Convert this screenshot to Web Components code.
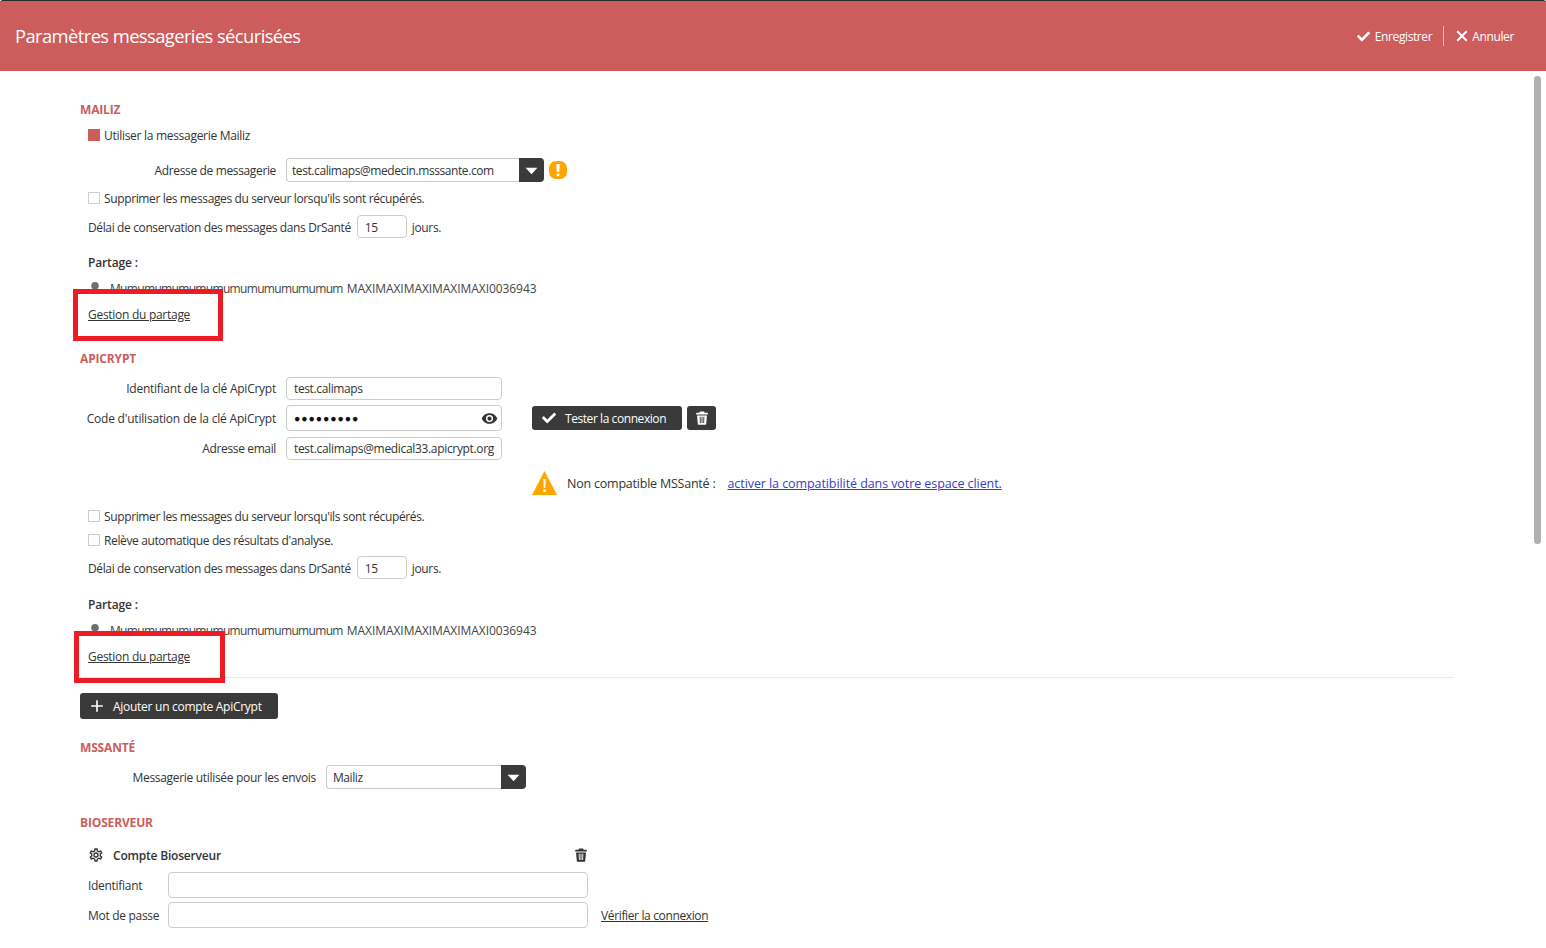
<!DOCTYPE html>
<html lang="fr">
<head>
<meta charset="utf-8">
<title>Paramètres messageries sécurisées</title>
<style>
    html, body { margin: 0; height: 100%; overflow: hidden; background: #fff; }
    body { font: 12px "Open Sans", "Liberation Sans", sans-serif; letter-spacing: -0.37px; color: #333; }
    .hr { height: 1px; background: #e8e8e8; width: 1374px; margin-top: 10px; }
</style>
</head>
<body>
<settings-page>
    <top-bar slot="top" heading="Paramètres messageries sécurisées"></top-bar>

    <section-title style="margin-top:30px">MAILIZ</section-title>
    <check-row checked style="margin-top:6px;letter-spacing:-0.29px">Utiliser la messagerie Mailiz</check-row>
    <mail-select label="Adresse de messagerie" value="test.calimaps@medecin.msssante.com" warn style="margin-top:13px"></mail-select>
    <check-row style="margin-top:6px">Supprimer les messages du serveur lorsqu'ils sont récupérés.</check-row>
    <delay-row style="margin-top:7px"></delay-row>
    <share-block style="margin-top:15px"></share-block>

    <section-title style="margin-top:25px">APICRYPT</section-title>
    <api-form style="margin-top:9px"></api-form>
    <check-row style="margin-top:11px">Supprimer les messages du serveur lorsqu'ils sont récupérés.</check-row>
    <check-row style="margin-top:4px">Relève automatique des résultats d'analyse.</check-row>
    <delay-row style="margin-top:6px"></delay-row>
    <share-block wide style="margin-top:16px"></share-block>
    <div class="hr"></div>
    <dark-button icon="plus" style="margin-top:15px;letter-spacing:-0.27px">Ajouter un compte ApiCrypt</dark-button>

    <section-title style="margin-top:20px">MSSANTÉ</section-title>
    <mail-select label="Messagerie utilisée pour les envois" value="Mailiz" wide style="margin-top:8px"></mail-select>

    <section-title style="margin-top:25px">BIOSERVEUR</section-title>
    <bio-form style="margin-top:13px"></bio-form>
</settings-page>

<script>
const ICONS = {
    check: ['0 0 512 512', 'M173.9 439.4l-166.4-166.4c-10-10-10-26.2 0-36.2l36.2-36.2c10-10 26.2-10 36.2 0L192 312.7 432.1 72.6c10-10 26.2-10 36.2 0l36.2 36.2c10 10 10 26.2 0 36.2l-294.4 294.4c-10 10-26.2 10-36.2 0z'],
    times: ['0 0 24 24', 'M5 2.6L12 9.6 19 2.6 21.4 5 14.4 12 21.4 19 19 21.4 12 14.4 5 21.4 2.6 19 9.6 12 2.6 5z'],
    plus: ['0 0 24 24', 'M10.6 2h2.8v8.6H22v2.8h-8.6V22h-2.8v-8.6H2v-2.8h8.6z'],
    trash: ['0 0 24 24', 'M8.5 1h7l1 2H21a1 1 0 0 1 1 1v2H2V4a1 1 0 0 1 1-1h4.500zM3.500 7.500h17L19.200 22a1.500 1.500 0 0 1-1.500 1.500H6.300A1.500 1.500 0 0 1 4.800 22zM8 10l.4 10.500h1.500L9.600 10zM11.200 10v10.500h1.600V10zM14.400 10l-.3 10.500h1.500L16 10z'],
    eye: ['0 0 24 24', 'M12 9a3 3 0 0 0-3 3 3 3 0 0 0 3 3 3 3 0 0 0 3-3 3 3 0 0 0-3-3m0 8a5 5 0 0 1-5-5 5 5 0 0 1 5-5 5 5 0 0 1 5 5 5 5 0 0 1-5 5m0-12.500C7 4.500 2.730 7.610 1 12c1.730 4.390 6 7.500 11 7.500s9.270-3.110 11-7.500c-1.730-4.390-6-7.500-11-7.500z'],
    gear: ['0 0 24 24', 'M12,8A4,4 0 0,1 16,12A4,4 0 0,1 12,16A4,4 0 0,1 8,12A4,4 0 0,1 12,8M12,10A2,2 0 0,0 10,12A2,2 0 0,0 12,14A2,2 0 0,0 14,12A2,2 0 0,0 12,10M10,22C9.75,22 9.54,21.82 9.5,21.58L9.13,18.93C8.5,18.68 7.96,18.34 7.44,17.94L4.95,18.95C4.73,19.03 4.46,18.95 4.34,18.73L2.34,15.27C2.21,15.05 2.27,14.78 2.46,14.63L4.57,12.97L4.5,12L4.57,11L2.46,9.37C2.27,9.22 2.21,8.95 2.34,8.73L4.34,5.27C4.46,5.05 4.73,4.96 4.95,5.05L7.44,6.05C7.96,5.66 8.5,5.32 9.13,5.07L9.5,2.42C9.54,2.18 9.75,2 10,2H14C14.25,2 14.46,2.18 14.5,2.42L14.87,5.07C15.5,5.32 16.04,5.66 16.56,6.05L19.05,5.05C19.27,4.96 19.54,5.05 19.66,5.27L21.66,8.73C21.79,8.95 21.73,9.22 21.54,9.37L19.43,11L19.5,12L19.43,13L21.54,14.63C21.73,14.78 21.79,15.05 21.66,15.27L19.66,18.73C19.54,18.95 19.27,19.04 19.05,18.95L16.56,17.95C16.04,18.34 15.5,18.68 14.87,18.93L14.5,21.58C14.46,21.82 14.25,22 14,22H10M11.25,4L10.88,6.61C9.68,6.86 8.62,7.5 7.85,8.39L5.44,7.35L4.69,8.65L6.8,10.2C6.4,11.37 6.4,12.64 6.8,13.8L4.68,15.36L5.43,16.66L7.86,15.62C8.63,16.5 9.68,17.14 10.87,17.38L11.24,20H12.76L13.13,17.39C14.32,17.14 15.37,16.5 16.14,15.62L18.57,16.66L19.32,15.36L17.2,13.81C17.6,12.64 17.6,11.37 17.2,10.2L19.31,8.65L18.56,7.35L16.15,8.39C15.38,7.5 14.32,6.86 13.12,6.62L12.75,4H11.25Z'],
    user: ['0 0 24 24', 'M12 0a6.500 6.500 0 1 1 0 13 6.500 6.500 0 0 1 0-13zM3 20v-3c0-2.500 4-4 9-4s9 1.500 9 4v3z'],
    caret: ['0 0 24 24', 'M1 7h22L12 19z'],
    alert: ['0 0 18 18', 'M7 0h4a7 7 0 0 1 7 7v4a7 7 0 0 1-7 7H7a7 7 0 0 1-7-7V7a7 7 0 0 1 7-7zM7.200 3l.5 8h2.600l.5-8zM7.700 12.500v2.700h2.600v-2.700z'],
};

function icon(name, size, color) {
    const [box, d] = ICONS[name];
    return `<svg width="${size}" height="${size}" viewBox="${box}" fill="${color || 'currentColor'}" fill-rule="evenodd" style="flex:none;display:block"><path d="${d}"/></svg>`;
}

const inputCss = `
    .input { box-sizing: border-box; border: 1px solid #ccc; border-radius: 4px; background: #fff;
        display: flex; align-items: center; padding: 0 6px; color: #333; white-space: nowrap; }
`;

// base class, just fills the shadow root
class Shadow extends HTMLElement {
    connectedCallback() {
        if (!this.shadowRoot) this.attachShadow({ mode: 'open' }).innerHTML = this.render();
    }
}

class SettingsPage extends Shadow {
    render() {
        return `<style>
            :host { display: block; position: relative; height: 948px; overflow: hidden; }
            .body { display: flex; flex-direction: column; padding-left: 80px; }
            .thumb { position: absolute; left: 1534px; top: 76px; width: 7px; height: 468px; border-radius: 4px; background: #b0b0b0; }
        </style>
        <slot name="top"></slot>
        <div class="body"><slot></slot></div>
        <div class="thumb"></div>`;
    }
}

class TopBar extends Shadow {
    render() {
        return `<style>
            :host { display: flex; align-items: center; box-sizing: border-box; height: 71px; padding: 0 32px 0 15px;
                background: #cd5c5c; border-top: 1px solid #2b2b2b; border-radius: 3px 3px 0 0; color: #fff; }
            h1 { margin: -2px 0 0; font-size: 18.4px; font-weight: 400; letter-spacing: -0.6px; flex: 1; }
            .act { display: flex; align-items: center; font-size: 12px; letter-spacing: -0.4px; }
            .act svg { margin-right: 5px; }
            .last svg { margin-right: 3px; }
            .sep { width: 1px; height: 20px; background: #e9b4b4; margin: 0 11px; }
        </style>
        <h1>${this.getAttribute('heading')}</h1>
        <div class="act">${icon('check', 13)}Enregistrer</div>
        <div class="sep"></div>
        <div class="act last" style="letter-spacing:-0.36px">${icon('times', 14)}Annuler</div>`;
    }
}

class SectionTitle extends Shadow {
    render() {
        return `<style>
            :host { display: block; height: 18px; line-height: 18px; font-weight: 700; font-size: 12px; color: #cd5c5c; letter-spacing: -0.15px; }
        </style><slot></slot>`;
    }
}

class CheckRow extends Shadow {
    render() {
        const on = this.hasAttribute('checked');
        return `<style>
            :host { display: flex; align-items: center; gap: 4px; height: 20px; margin-left: 8px; }
            i { box-sizing: border-box; width: 12px; height: 12px; border: 1px solid ${on ? '#cd5c5c' : '#ccc'}; background: ${on ? '#cd5c5c' : '#fff'}; }
        </style><i></i><span><slot></slot></span>`;
    }
}

class MailSelect extends Shadow {
    render() {
        const wide = this.hasAttribute('wide');
        return `<style>${inputCss}
            :host { display: flex; align-items: center; height: 24px; }
            label { width: ${wide ? 236 : 196}px; text-align: right; margin-right: 10px; white-space: nowrap; letter-spacing: ${wide ? -0.31 : -0.36}px; }
            .input { width: ${wide ? 175 : 233}px; height: 24px; border-radius: 4px 0 0 4px; border-right: 0; padding-left: ${wide ? 6 : 5}px; letter-spacing: -0.42px; }
            .arrow { width: 25px; height: 24px; background: #3a3a3a; color: #fff; border-radius: 0 4px 4px 0;
                display: flex; align-items: center; justify-content: center; }
            .warn { margin-left: 5px; color: #ffa500; }
        </style>
        <label>${this.getAttribute('label')}</label>
        <div class="input">${this.getAttribute('value')}</div>
        <div class="arrow">${icon('caret', 13)}</div>
        ${this.hasAttribute('warn') ? `<div class="warn">${icon('alert', 18)}</div>` : ''}`;
    }
}

class DelayRow extends Shadow {
    render() {
        return `<style>${inputCss}
            :host { display: flex; align-items: center; gap: 5px; height: 23px; margin-left: 8px; }
            span { margin-top: 2px; }
            .input { width: 50px; height: 23px; padding: 2px 0 0 7px; margin-left: 1px; }
        </style>
        <span>Délai de conservation des messages dans DrSanté</span>
        <div class="input">15</div>
        <span>jours.</span>`;
    }
}

class ShareBlock extends Shadow {
    render() {
        const wide = this.hasAttribute('wide');
        return `<style>
            :host { display: block; position: relative; margin-left: 8px; }
            .head { height: 20px; line-height: 20px; font-weight: 600; letter-spacing: -0.15px; }
            .user { display: flex; align-items: center; height: 20px; margin-top: 5px; color: #444; }
            .user svg { margin: 2px 8px 0 0; }
            .mu { letter-spacing: -0.67px; margin-right: 4px; }
            .maxi { letter-spacing: -0.06px; }
            a { display: block; height: 20px; line-height: 20px; margin-top: 7px; color: #333; text-decoration: underline; letter-spacing: -0.28px; }
            .mark { position: absolute; left: ${wide ? -14 : -15}px; top: 36px; box-sizing: border-box; width: ${wide ? 151 : 150}px; height: 52px; border: 5px solid #ed1c24; }
        </style>
        <div class="head">Partage :</div>
        <div class="user">${icon('user', 14, '#707070')}<span class="mu">Mumumumumumumumumumumumumum</span><span class="maxi">MAXIMAXIMAXIMAXIMAXI0036943</span></div>
        <a>Gestion du partage</a>
        <div class="mark"></div>`;
    }
}

class DarkButton extends Shadow {
    render() {
        const name = this.getAttribute('icon');
        return `<style>
            :host { display: inline-flex; align-self: flex-start; align-items: center; box-sizing: border-box; height: 26px; gap: 9px; padding: 0 16px 0 10px;
                background: #3a3a3a; color: #fff; border-radius: 3px; white-space: nowrap; }
        </style>${name ? icon(name, 14) : ''}<slot></slot>`;
    }
}

class ApiForm extends Shadow {
    render() {
        return `<style>${inputCss}
            :host { display: block; }
            .grid { display: grid; grid-template-columns: 196px 216px auto; grid-template-rows: 23px 27px 23px; column-gap: 10px; row-gap: 5px; }
            label { text-align: right; white-space: nowrap; line-height: 23px; }
            .input { height: 23px; padding-left: 7px; }
            .input.tall { height: 26px; }
            .eye { margin-left: auto; color: #333; margin-right: -3px; }
            .dots { font-size: 10.5px; letter-spacing: 0.9px; color: #111; }
            .tools { display: flex; gap: 5px; margin: 1px 0 0 20px; height: 24px; }
            dark-button { width: 150px; height: 24px; letter-spacing: -0.43px; }
            .bin { width: 29px; height: 24px; background: #3a3a3a; color: #fff; border-radius: 3px; display: flex; align-items: center; justify-content: center; }
            .note { display: flex; align-items: center; margin: 11px 0 0 452px; height: 24px; font-size: 12.5px; letter-spacing: -0.22px; }
            .note svg { margin-right: 10px; }
            a { color: #3b3bc8; text-decoration: underline; margin-left: 12px; letter-spacing: -0.08px; }
        </style>
        <div class="grid">
            <label style="letter-spacing:-0.25px">Identifiant de la clé ApiCrypt</label><div class="input">test.calimaps</div><div></div>
            <label style="letter-spacing:-0.2px;line-height:28px">Code d'utilisation de la clé ApiCrypt</label>
            <div class="input tall"><span class="dots">●●●●●●●●●</span><span class="eye">${icon('eye', 17)}</span></div>
            <div class="tools"><dark-button icon="check">Tester la connexion</dark-button><div class="bin">${icon('trash', 14)}</div></div>
            <label>Adresse email</label><div class="input" style="letter-spacing:-0.33px">test.calimaps@medical33.apicrypt.org</div><div></div>
        </div>
        <div class="note">
            <svg width="25" height="24" viewBox="0 0 25 24"><path d="M12.500 0L25 24H0z" fill="#ffa500"/><path d="M11.300 8h2.400l-.4 9h-1.600zM11.300 18.500h2.400V21h-2.400z" fill="#fff"/></svg>
            <span>Non compatible MSSanté :</span>
            <a>activer la compatibilité dans votre espace client.</a>
        </div>`;
    }
}

class BioForm extends Shadow {
    render() {
        return `<style>${inputCss}
            :host { display: block; margin-left: 8px; letter-spacing: -0.3px; }
            .head { display: flex; align-items: center; width: 500px; height: 20px; gap: 9px; font-weight: 600; letter-spacing: -0.2px; }
            .head .bin { margin-left: auto; color: #333; }
            .row { display: grid; grid-template-columns: 80px 420px auto; align-items: center; height: 26px; margin-top: 4px; }
            .head + .row { margin-top: 7px; }
            .input { height: 26px; }
            a { margin-left: 13px; color: #333; text-decoration: underline; white-space: nowrap; letter-spacing: -0.36px; }
        </style>
        <div class="head">${icon('gear', 16)}<span>Compte Bioserveur</span><span class="bin">${icon('trash', 14)}</span></div>
        <div class="row"><span>Identifiant</span><div class="input"></div><span></span></div>
        <div class="row"><span>Mot de passe</span><div class="input"></div><a>Vérifier la connexion</a></div>`;
    }
}

customElements.define('settings-page', SettingsPage);
customElements.define('top-bar', TopBar);
customElements.define('section-title', SectionTitle);
customElements.define('check-row', CheckRow);
customElements.define('mail-select', MailSelect);
customElements.define('delay-row', DelayRow);
customElements.define('share-block', ShareBlock);
customElements.define('dark-button', DarkButton);
customElements.define('api-form', ApiForm);
customElements.define('bio-form', BioForm);
</script>
</body>
</html>
